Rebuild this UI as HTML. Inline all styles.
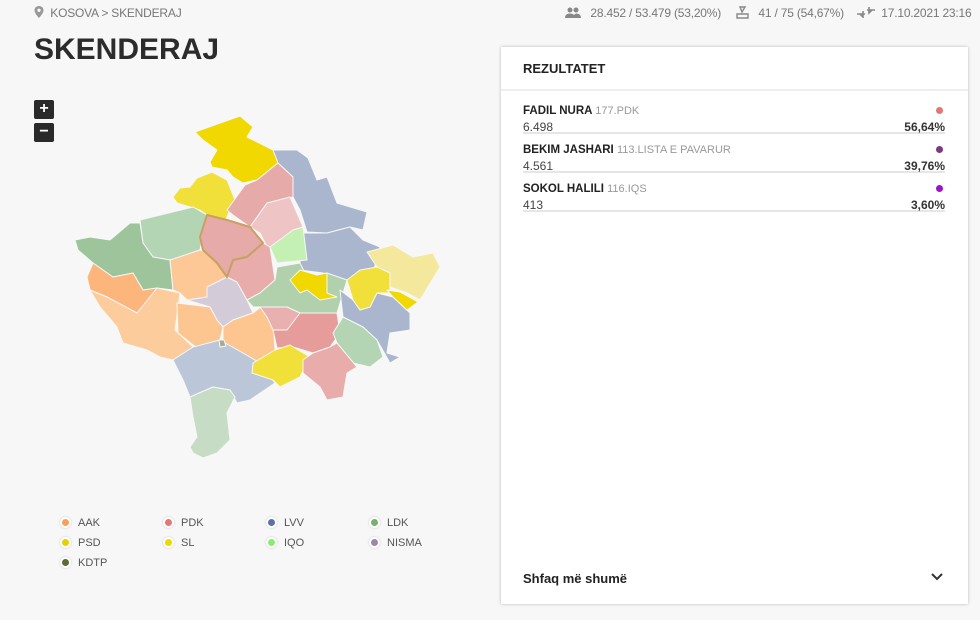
<!DOCTYPE html>
<html><head><meta charset="utf-8"><style>
*{margin:0;padding:0;box-sizing:border-box}
body{width:980px;height:620px;background:#f7f7f7;font-family:"Liberation Sans",sans-serif;color:#333;position:relative;overflow:hidden}
.abs{position:absolute}
.top{top:6px;font-size:12px;color:#777;white-space:nowrap;letter-spacing:-0.2px}
h1{position:absolute;left:34px;top:33px;font-size:30px;font-weight:bold;color:#2c2c2c;letter-spacing:0}
.zb{position:absolute;left:34px;width:20px;height:19px;background:#2a2a2a;color:#fff;border-radius:2px;font-weight:bold;text-align:center;line-height:18px;font-size:16px}
.panel{position:absolute;left:501px;top:47px;width:467px;height:557px;background:#fff;box-shadow:0 0 3px rgba(0,0,0,.25)}
.ph{height:44px;border-bottom:2px solid #eee;padding:14px 0 0 22px;font-weight:bold;font-size:13px;color:#222}
.row{position:absolute;left:22px;width:422px;height:29px;border-bottom:2px solid #e6e6e6;font-size:12px}
.row .n{position:absolute;top:0;left:0;font-weight:bold;font-size:11.5px;color:#222}
.row .n span{font-weight:normal;color:#999;font-size:11px}
.row .v{position:absolute;top:15px;left:0;font-size:12px;color:#444}
.row .p{position:absolute;top:15px;right:0;font-weight:bold;color:#333}
.row .d{position:absolute;top:2px;right:2px;width:7px;height:7px;border-radius:50%}
.more{position:absolute;left:22px;top:524px;font-weight:bold;font-size:13px;color:#222}
.leg{position:absolute;font-size:11px;color:#555;padding-left:18px;line-height:12px}
.leg i{position:absolute;left:0;top:0;width:11px;height:11px;border-radius:50%;border:2px solid #fff;box-shadow:0 0 2px rgba(0,0,0,.2)}
</style></head><body>
<div class="abs top" style="left:34px"><svg width="10" height="12" viewBox="0 0 10 12" style="vertical-align:-1px"><path d="M5 0C2.3 0 .5 2 .5 4.3 .5 7.5 5 12 5 12s4.5-4.5 4.5-7.7C9.5 2 7.7 0 5 0zm0 6a1.7 1.7 0 110-3.4A1.7 1.7 0 015 6z" fill="#999"/></svg>&nbsp; KOSOVA &gt; SKENDERAJ</div>
<div class="abs top" style="left:565px"><svg width="16" height="11" viewBox="0 0 16 11" style="vertical-align:-1px"><circle cx="5" cy="3" r="2.5" fill="#888"/><circle cx="11" cy="3" r="2.5" fill="#888"/><path d="M0 11c0-3 2-4.5 5-4.5s5 1.5 5 4.5zM8 11c0-2 1-3.5 3-4.5 3 0 5 1.5 5 4.5z" fill="#888"/></svg>&nbsp;&nbsp; 28.452 / 53.479 (53,20%)</div>
<div class="abs top" style="left:736px"><svg width="13" height="13" viewBox="0 0 13 13" style="vertical-align:-2px"><path d="M4 1h5l-3 5zM1 8h11v4H1z" fill="none" stroke="#888" stroke-width="1.4"/></svg>&nbsp;&nbsp; 41 / 75 (54,67%)</div>
<div class="abs top" style="left:857px"><svg width="18" height="12" viewBox="0 0 18 12" style="vertical-align:-1px"><path d="M0 8h8M6 5v6l-3-3M10 4h8M12 1v6l3-3" stroke="#888" stroke-width="1.6" fill="none"/></svg>&nbsp; 17.10.2021 23:16</div>
<h1>SKENDERAJ</h1>
<div class="zb" style="top:100px">+</div>
<div class="zb" style="top:123px">−</div>
<svg class="abs" style="left:0;top:0" width="500" height="500" viewBox="0 0 500 500">
<g stroke="#f7f7f7" stroke-width="1" stroke-linejoin="round">
<polygon fill="#f0d800" points="195,132 240,116 253,127 247,137 273,150 278,163 257,180 243,183 233,177 227,170 212,167 210,162 217,150 203,140"/>
<polygon fill="#f2e03a" points="173,197 180,188 190,187 197,178 212,172 227,180 235,200 229,212 225,222 207,215 200,210 177,203"/>
<polygon fill="#a9b6cd" points="273,150 297,150 308,158 317,180 327,177 337,203 367,212 363,230 350,227 327,233 307,232 300,210 293,197 293,177 278,163"/>
<polygon fill="#a9b6cd" points="300,233 327,233 350,227 363,240 380,247 373,273 347,280 323,273 300,270"/>
<polygon fill="#e6aaa8" points="227,210 245,185 257,180 278,163 293,177 293,197 267,203 250,227 233,215"/>
<polygon fill="#eec4c4" points="250,227 267,203 290,197 303,227 293,240 277,257 267,247 260,233"/>
<polygon fill="#b4d5b3" points="140,220 193,207 207,215 200,250 180,257 170,260 153,257 143,243"/>
<polygon fill="#9dc49b" points="75,240 90,237 110,240 130,223 140,223 143,243 153,257 170,260 173,290 157,288 143,290 133,273 113,277 93,263 78,250"/>
<polygon fill="#fcb57a" points="87,277 93,263 113,277 133,273 143,290 157,288 150,307 137,313 107,297 90,290"/>
<polygon fill="#fdcc9c" points="90,290 107,297 137,313 157,288 180,293 175,330 193,347 173,360 160,357 147,350 123,343 117,327 100,307"/>
<polygon fill="#fdc896" points="170,260 200,250 233,260 227,277 207,287 207,297 187,300 180,293 173,290"/>
<polygon fill="#d4cbd9" points="187,300 207,297 207,287 227,277 237,282 247,300 253,313 233,320 223,327 217,320 210,307"/>
<polygon fill="#fdc690" points="177,303 210,307 217,320 223,327 220,340 197,348 178,333"/>
<polygon fill="#fdc690" points="223,327 233,320 253,313 263,305 273,320 275,350 260,363 243,353 223,347"/>
<polygon fill="#e8adab" points="233,260 247,257 263,243 270,247 275,280 260,293 247,300 237,282 227,277"/>
<polygon fill="#c4f0b4" points="270,247 293,230 303,227 307,260 277,263"/>
<polygon fill="#b0d1ac" points="247,300 260,293 275,280 277,267 300,263 307,277 327,273 347,280 337,313 300,313 287,307 267,307 253,307"/>
<polygon fill="#f0d800" points="290,280 300,270 317,275 327,273 327,293 337,297 320,300 307,290 300,293"/>
<polygon fill="#f4e89c" points="367,252 393,245 413,257 433,253 440,267 420,300 407,293 390,287 390,273 377,267"/>
<polygon fill="#a9b6cd" points="340,290 353,300 360,310 370,307 377,293 393,297 410,313 410,330 390,333 387,353 400,357 390,363 377,340 363,327 343,317"/>
<polygon fill="#f2e03a" points="347,280 360,270 377,267 390,273 390,293 377,293 370,307 360,310 353,300"/>
<polygon fill="#f0d800" points="387,290 400,292 418,302 407,310 393,297"/>
<polygon fill="#e8b0ae" points="260,307 287,307 300,313 300,320 287,330 273,330 267,317"/>
<polygon fill="#e59c9a" points="273,330 287,330 300,313 337,313 340,333 330,347 313,353 293,347 277,348"/>
<polygon fill="#b4d5b3" points="333,333 343,317 363,327 377,340 383,357 370,367 353,363 337,343"/>
<polygon fill="#bbc7d8" points="173,360 193,347 220,340 243,353 260,363 275,383 250,400 237,403 230,390 213,387 190,397 183,380"/>
<polygon fill="#f2e03a" points="253,363 275,350 290,345 310,357 300,377 280,387 273,380 252,373"/>
<polygon fill="#e8adab" points="303,360 313,353 330,347 337,343 357,367 347,373 343,397 327,400 320,387 303,373"/>
<polygon fill="#c6dcc4" points="190,397 213,387 230,390 235,397 227,413 230,440 217,453 203,458 193,453 190,447 197,437 193,417"/>
<polygon fill="#a8ab8e" points="219,340 224,340 226,346 220,347"/>
</g>
<polygon fill="#e6aaa8" stroke="#c8a060" stroke-width="2" stroke-linejoin="round" points="207,215 227,220 250,227 263,243 247,257 233,260 227,277 217,263 203,250 200,237"/>
</svg>
<div class="leg" style="left:60px;top:517px"><i style="background:#f7a256"></i>AAK</div>
<div class="leg" style="left:163px;top:517px"><i style="background:#e57772"></i>PDK</div>
<div class="leg" style="left:266px;top:517px"><i style="background:#5a72a8"></i>LVV</div>
<div class="leg" style="left:369px;top:517px"><i style="background:#74b16f"></i>LDK</div>
<div class="leg" style="left:60px;top:537px"><i style="background:#e6cf00"></i>PSD</div>
<div class="leg" style="left:163px;top:537px"><i style="background:#efd800"></i>SL</div>
<div class="leg" style="left:266px;top:537px"><i style="background:#86ee6e"></i>IQO</div>
<div class="leg" style="left:369px;top:537px"><i style="background:#9b88a8"></i>NISMA</div>
<div class="leg" style="left:60px;top:557px"><i style="background:#5d6a32"></i>KDTP</div>
<div class="panel">
<div class="ph">REZULTATET</div>
<div class="row" style="top:58px"><div class="n">FADIL NURA <span>177.PDK</span></div><div class="d" style="background:#e57772"></div><div class="v">6.498</div><div class="p">56,64%</div></div>
<div class="row" style="top:97px"><div class="n">BEKIM JASHARI <span>113.LISTA E PAVARUR</span></div><div class="d" style="background:#7b3a80"></div><div class="v">4.561</div><div class="p">39,76%</div></div>
<div class="row" style="top:136px"><div class="n">SOKOL HALILI <span>116.IQS</span></div><div class="d" style="background:#9b14c8"></div><div class="v">413</div><div class="p">3,60%</div></div>
<div class="more">Shfaq më shumë</div>
<svg class="abs" style="left:430px;top:526px" width="12" height="8" viewBox="0 0 12 8"><path d="M1 1l5 5 5-5" stroke="#333" stroke-width="2" fill="none"/></svg>
</div>
</body></html>
